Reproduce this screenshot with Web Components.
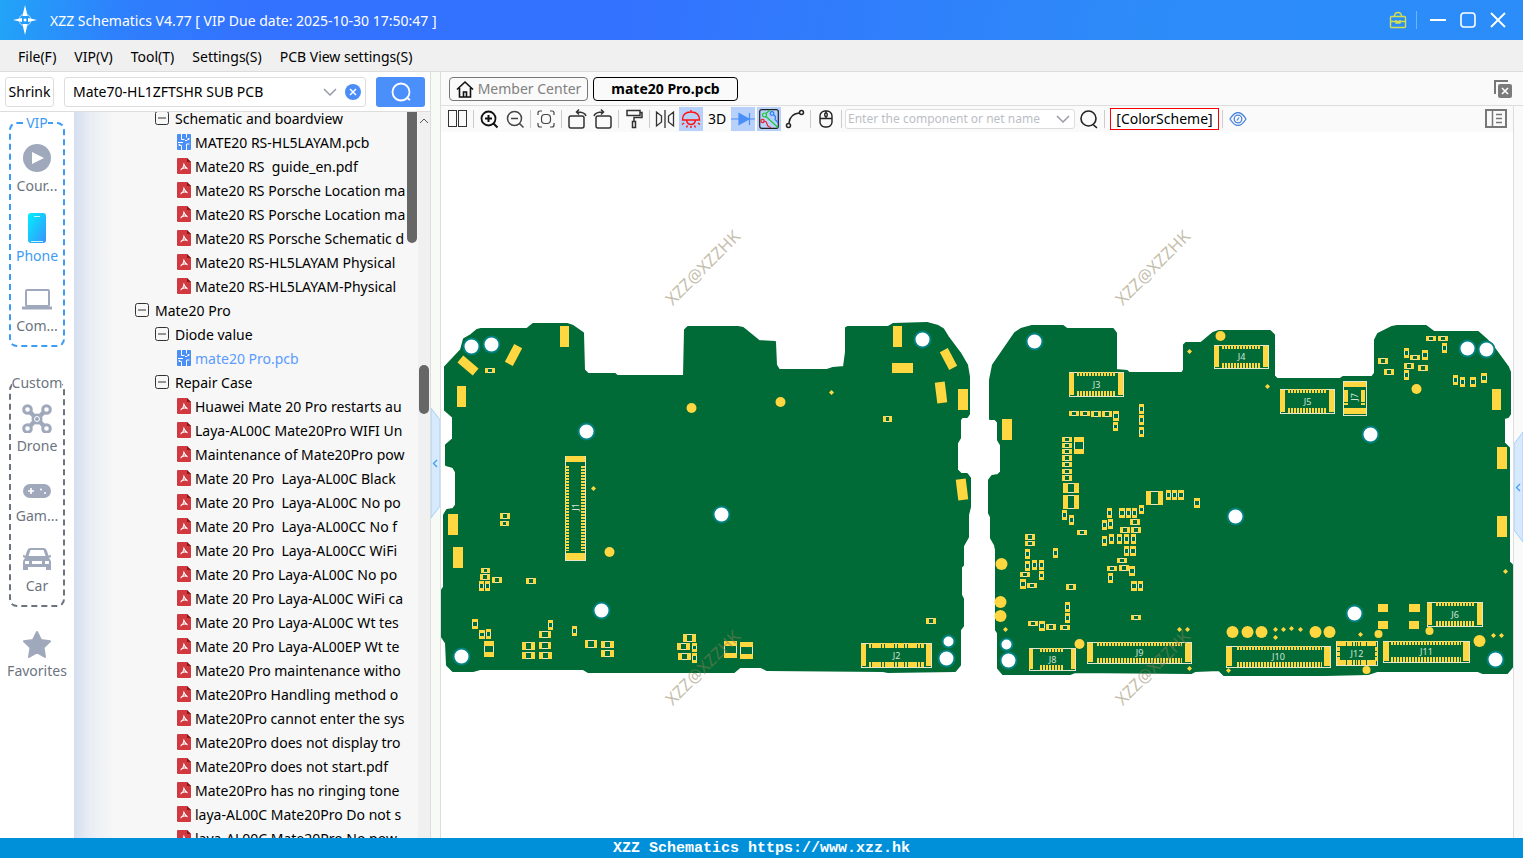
<!DOCTYPE html>
<html lang="en">
<head>
    <meta charset="UTF-8">
    <meta name="viewport" content="width=device-width, initial-scale=1.0">
    <title>XZZ Schematics</title>
    <style>
        html, body {
            height: 100%;
            margin: 0;
        }
        body {
            font-family: "Noto Sans", "Open Sans", sans-serif;
            font-size: 14px;
            line-height: 20px;
            color: #000;
            overflow: hidden;
        }
    </style>
</head>
<body>
    <xzz-app></xzz-app>

    <script>
        const icons = {
            star4: `<svg width="24" height="30" viewBox="0 0 24 30" fill="#fff"><path d="M12 0l2.6 11h-5.200zM12 30l-2.600-11h5.200zM0 15l9-2v4zM24 15l-9-2v4z"/><circle cx="12" cy="15" r="6" fill="none" stroke="#fff" stroke-opacity=".6"/><circle cx="12" cy="15" r="1.500"/></svg>`,
            vip: `<svg width="18" height="18" viewBox="0 0 18 18" fill="none" stroke="#d3e04c" stroke-width="1.400"><rect x="1.500" y="5.500" width="15" height="11" rx="1"/><path d="M5.500 5.500q0-4 3.500-4t3.500 4M1.500 10.500h15M7 9v3h4v-3"/></svg>`,
            min: `<svg width="18" height="18"><path d="M1 9h16" stroke="#fff" stroke-width="2"/></svg>`,
            max: `<svg width="18" height="18"><rect x="2" y="2" width="14" height="14" rx="3" fill="none" stroke="#fff" stroke-width="1.600"/></svg>`,
            close: `<svg width="18" height="18"><path d="M2 2l14 14M16 2L2 16" stroke="#fff" stroke-width="1.800"/></svg>`,
            down: `<svg width="14" height="8" fill="none" stroke="#999ca8" stroke-width="1.500"><path d="M1 1l6 6 6-6"/></svg>`,
            clear: `<svg width="16" height="16"><circle cx="8" cy="8" r="8" fill="#4a8df6"/><path d="M5 5l6 6M11 5l-6 6" stroke="#fff" stroke-width="1.500"/></svg>`,
            find: `<svg width="22" height="22" fill="none" stroke="#fff" stroke-width="1.800"><circle cx="11" cy="11" r="8.500"/><path d="M16.500 16.500l3.500 2.500"/></svg>`,
            play: `<svg width="30" height="30"><circle cx="15" cy="15" r="14" fill="#a0a9bc"/><path d="M10 9v12l12-6z" fill="#fff"/></svg>`,
            phone: `<svg width="30" height="30"><defs><linearGradient id="g" x1="0" x2="1" y2="1"><stop stop-color="#00f0ff"/><stop offset="1" stop-color="#3a91fb"/></linearGradient></defs><rect x="6" y="0" width="18" height="30" rx="3" fill="url(#g)"/><path d="M12 3.500h6M9 28.500h12" stroke="#c8f6ff" stroke-width="1"/></svg>`,
            laptop: `<svg width="30" height="30" fill="none" stroke="#a0a9bc" stroke-width="2"><rect x="4" y="7" width="23" height="16" rx="1"/><path d="M0 25h30" stroke-width="3"/></svg>`,
            drone: `<svg width="30" height="30" viewBox="0 -1 30 30" fill="none" stroke="#a0a9bc"><path d="M8 8l14 14M22 8L8 22" stroke-width="4.500"/><g stroke-width="3"><circle cx="5.500" cy="5.500" r="3.800"/><circle cx="24.500" cy="5.500" r="3.800"/><circle cx="5.500" cy="24.500" r="3.800"/><circle cx="24.500" cy="24.500" r="3.800"/></g><circle cx="15" cy="15" r="5.500" fill="#a0a9bc" stroke="none"/><circle cx="15" cy="15" r="2.500" fill="#a0a9bc" stroke="#fff"/></svg>`,
            game: `<svg width="30" height="30"><rect x="1" y="11" width="28" height="14" rx="7" fill="#a0a9bc"/><path d="M6 18h6M9 15v6" stroke="#fff" stroke-width="1.600"/><circle cx="19" cy="16.500" r="1" fill="#fff"/><circle cx="23" cy="20" r="1" fill="#fff"/></svg>`,
            car: `<svg width="30" height="30" viewBox="0 -1 30 30"><path fill="#a0a9bc" fill-rule="evenodd" d="M8 4h14q2 0 3 3l1.500 4.500 2.500-.5v2l-2 1q2 2 2 4v8h-5v-3h-18v3h-5v-8q0-2 2-4l-2-1v-2l2.500.5L5 7q1-3 3-3zM8.500 6L6.500 12h17l-2-6zM3 17v3h4v-3zM23 17v3h4v-3zM10 17v3h10v-3z"/></svg>`,
            star: `<svg width="30" height="30" viewBox="0 -1 30 30"><path fill="#a0a9bc" stroke="#a0a9bc" stroke-width="2" stroke-linejoin="round" d="M15 3l4 8 9 1.300-6.500 6.300L23 28l-8-4.500L7 28l1.500-9.400L2 12.300 11 11z"/></svg>`,
            minus: `<svg width="14" height="14" fill="none" stroke="#333"><rect x=".5" y=".5" width="13" height="13" rx="2"/><path d="M3 7h8"/></svg>`,
            pdf: `<svg width="14" height="16"><path d="M0 1q0-1 1-1h9l4 4v11q0 1-1 1h-12q-1 0-1-1z" fill="#d2383f"/><path d="M10 0v4h4z" fill="#8e1218"/><path d="M6.500 5.500q1.500 4 4 5.500M7 6q-.5 4.500-3.500 6M4 11.300q3-2 6.500-.800" fill="none" stroke="#fff" stroke-width="1.100"/></svg>`,
            pcb: `<svg width="14" height="16"><rect width="14" height="16" rx="1" fill="#4a8ff7"/><path d="M4.500 0v5.500h3M4.500 16v-4.500h-2M9.500 0v3.500M9.500 16v-6h3" fill="none" stroke="#fff"/><path d="M1 8.500h5M8 6.500h2l2-2" fill="none" stroke="#fff"/><circle cx="2.500" cy="11" r="1" fill="#fff"/><circle cx="11.500" cy="5" r="1" fill="#fff"/></svg>`,
            home: `<svg width="18" height="18" fill="none" stroke="#111" stroke-width="1.600"><path d="M1 9.500l8-7.500 8 7.500M3.500 8v9h11v-9M7.500 17v-5h3v5"/></svg>`,
            closeAll: `<svg width="20" height="20"><path d="M2 15V2h13" fill="none" stroke="#777" stroke-width="2"/><rect x="5" y="5" width="14" height="14" rx="2" fill="#7b7b7b"/><path d="M9 9l6 6M15 9l-6 6" stroke="#fff" stroke-width="1.600"/></svg>`,
            split: `<svg width="20" height="18" fill="none" stroke="#333"><rect x=".5" y=".5" width="8" height="16"/><rect x="10.500" y=".5" width="8" height="16"/></svg>`,
            zoomIn: `<svg width="20" height="20" fill="none" stroke="#111" stroke-width="1.800"><circle cx="9.500" cy="9.500" r="7"/><path d="M14.500 14.500l4 4M6 9.500h7M9.500 6v7" stroke-width="2"/></svg>`,
            zoomOut: `<svg width="20" height="20" fill="none" stroke="#444" stroke-width="1.500"><circle cx="9.500" cy="9.500" r="7"/><path d="M14.500 14.500l4 4M6 9.500h7"/></svg>`,
            fit: `<svg width="18" height="18" fill="none" stroke="#444" stroke-width="1.200"><path d="M1 5V3q0-2 2-2h2M13 1h2q2 0 2 2v2M17 13v2q0 2-2 2h-2M5 17H3q-2 0-2-2v-2"/><rect x="4.500" y="4.500" width="9" height="9" rx="3.500"/></svg>`,
            rotateL: `<svg width="20" height="20" fill="none" stroke="#333" stroke-width="1.500"><rect x="2" y="7" width="15" height="12" rx="2"/><path d="M19 7q-1-4-9-4M12 .5L9.500 3l2.500 2.500"/></svg>`,
            rotateR: `<svg width="20" height="20" fill="none" stroke="#333" stroke-width="1.500"><rect x="3" y="7" width="15" height="12" rx="2"/><path d="M1 7q1-4 9-4M8 .5l2.500 2.500L8 5.500"/></svg>`,
            roller: `<svg width="18" height="20" fill="none" stroke="#333" stroke-width="1.500"><rect x="2" y="1.500" width="13" height="5"/><path d="M15 3.500h2v5H9v4M7.500 12.500h3v6h-3z"/></svg>`,
            mirror: `<svg width="20" height="18" fill="none" stroke="#333" stroke-width="1.300"><path d="M10 0v18M1.500 2v14l5-4V6zM18.500 2v14l-5-4V6z"/></svg>`,
            lamp: `<svg width="20" height="20" fill="none" stroke="#f11" stroke-width="1.400"><path d="M1.500 11q0-8 8.500-8t8.500 8zM10 3V1M5.500 11.500q1 4 4.500 4t4.500-4M3 14l-2 1.500M17 14l2 1.500M6.500 16.500l-1 2M13.500 16.500l1 2M10 17v2"/></svg>`,
            diode: `<svg width="24" height="20" fill="#4a8ff7" stroke="#4a8ff7" stroke-width="1.200"><path d="M0 10h24M18.500 4v12"/><path d="M8 4.500l10 5.500-10 5.500z"/></svg>`,
            nets: `<svg width="20" height="20" fill="none" stroke-width="1.200"><rect x=".7" y=".7" width="18.600" height="18.600" rx="2" stroke="#222"/><path d="M7 7.500l12 11M7 4.500L11 1" stroke="#1bc436"/><circle cx="5.500" cy="6" r="2" stroke="#1bc436"/><circle cx="13" cy="4.500" r="1.800" stroke="#2b7cf5"/><path d="M14.500 5.500q3 2 1.500 5l3 3" stroke="#2b7cf5"/><circle cx="3.500" cy="12" r="1.600" stroke="#e22"/><path d="M5 12.500q2.500-.5 3 2.500t4 3.500" stroke="#e22"/></svg>`,
            curve: `<svg width="20" height="20" fill="none" stroke="#222" stroke-width="1.500"><circle cx="16.500" cy="3.500" r="2"/><circle cx="3.500" cy="16.500" r="2"/><path d="M4 14Q5 5 14 4"/></svg>`,
            mouse: `<svg width="16" height="18" fill="none" stroke="#222" stroke-width="1.400"><rect x="2" y="1" width="12" height="16" rx="5"/><path d="M2 8.500h12M8 1v2M8 6v2"/><rect x="6.800" y="3" width="2.400" height="3.500" rx="1"/></svg>`,
            search: `<svg width="20" height="20" fill="none" stroke="#222" stroke-width="1.600"><circle cx="9.500" cy="9.500" r="7.500"/><path d="M14 15.500l4 3.500"/></svg>`,
            eye: `<svg width="18" height="14" fill="none" stroke="#4a84e0" stroke-width="1.300"><path d="M1 7q8-13 16 0q-8 13-16 0z"/><circle cx="9" cy="7" r="3.800"/><path d="M8 8.500l2-3"/></svg>`,
            panel: `<svg width="22" height="20" fill="none" stroke="#777" stroke-width="2"><rect x="1" y="1" width="20" height="17"/><path d="M7.500 1v17M11 5.500h6M11 9.500h6M11 13.500h6" stroke-width="1.500"/></svg>`
        }

        // Small base class: attaches the root and fills it from render()
        class XzzElement extends HTMLElement {
            constructor() {
                super();
                this.attachShadow({mode: 'open'})
            }

            connectedCallback() {
                const template = document.createElement("template")
                template.innerHTML = `
                    <style>
                        * { box-sizing: border-box; }
                        svg { display: block; }
                        button, input { font: inherit; color: inherit; margin: 0; }
                        button { border: 0; padding: 0; background: none; }
                    </style>
                    ${this.render()}`
                this.shadowRoot.appendChild(template.content.cloneNode(true));
            }
        }

        class TitleBar extends XzzElement {
            render() {
                return `
                    <style>
                        :host {
                            display: flex;
                            align-items: center;
                            height: 40px;
                            padding: 0 16px 0 13px;
                            color: #fff;
                            background: linear-gradient(100deg, #22a4f8 0, #2e80fc 8%, #3371ff 17%, #3371ff 40%, #2d8bf8 75%, #2b8df9 100%);
                        }
                        h1 { flex: 1; margin: 0 0 0 13px; padding-top: 2px; font-size: 14px; font-weight: 400; }
                        .buttons { display: flex; align-items: center; gap: 12px; }
                        .buttons button:first-child { margin-right: -3px; }
                        i { width: 1px; height: 18px; background: #6fb3ff; }
                    </style>
                    ${icons.star4}
                    <h1><slot></slot></h1>
                    <div class="buttons">
                        <button aria-label="VIP">${icons.vip}</button>
                        <i></i>
                        <button aria-label="Minimize">${icons.min}</button>
                        <button aria-label="Maximize">${icons.max}</button>
                        <button aria-label="Close">${icons.close}</button>
                    </div>`
            }
        }

        class MenuBar extends XzzElement {
            render() {
                const items = ["File(F)", "VIP(V)", "Tool(T)", "Settings(S)", "PCB View settings(S)"]
                return `
                    <style>
                        :host {
                            display: flex;
                            gap: 18px;
                            height: 32px;
                            padding: 2px 18px 0;
                            background: #f0f0f0;
                            border-bottom: 1px solid #dcdcdc;
                            box-sizing: border-box;
                        }
                    </style>
                    ${items.map(item => `<button>${item}</button>`).join("")}`
            }
        }

        class SearchBar extends XzzElement {
            render() {
                return `
                    <style>
                        :host {
                            display: flex;
                            align-items: center;
                            height: 40px;
                            padding: 0 5px;
                            box-sizing: border-box;
                            background: #fff;
                            border-bottom: 1px solid #ddd;
                        }
                        .shrink { width: 49px; height: 30px; border: 1px solid #ddd; border-radius: 3px; }
                        .field {
                            flex: 1;
                            display: flex;
                            align-items: center;
                            gap: 8px;
                            height: 30px;
                            margin: 0 10px;
                            padding: 0 4px 0 8px;
                            border: 1px solid #ddd;
                            border-radius: 3px;
                            min-width: 0;
                        }
                        input { flex: 1; min-width: 0; border: 0; padding: 0; outline: 0; background: none; }
                        .go { display: grid; place-items: center; width: 49px; height: 30px; background: #4b8ffb; border-radius: 3px; }
                    </style>
                    <button class="shrink">Shrink</button>
                    <div class="field">
                        <input aria-label="Search model" value="Mate70-HL1ZFTSHR SUB PCB">
                        <button aria-label="History">${icons.down}</button>
                        <button aria-label="Clear">${icons.clear}</button>
                    </div>
                    <button class="go" aria-label="Search">${icons.find}</button>`
            }
        }

        class NavItem extends XzzElement {
            render() {
                return `
                    <style>
                        :host { display: block; color: #6c7480; }
                        :host([active]) { color: #3d9bf5; }
                        button { display: flex; flex-direction: column; align-items: center; gap: 3px; width: 100%; white-space: nowrap; }
                    </style>
                    <button>${icons[this.getAttribute("icon")]}<span><slot></slot></span></button>`
            }
        }

        class SideNav extends XzzElement {
            render() {
                return `
                    <style>
                        :host { display: flex; flex-direction: column; width: 74px; background: #fff; padding-top: 1px; box-sizing: border-box; }
                        fieldset {
                            display: flex;
                            flex-direction: column;
                            gap: 17px;
                            min-width: 0;
                            margin: 0 9px 26px;
                            padding: 10px 0 9px;
                            border: 2px dashed #3d9bf5;
                            border-radius: 8px;
                        }
                        fieldset.custom { border-color: #6c7480; margin-bottom: 21px; }
                        legend { margin: 0 auto; padding: 0; color: #3d9bf5; }
                        .custom legend { color: #6c7480; }
                    </style>
                    <fieldset>
                        <legend>VIP</legend>
                        <nav-item icon="play">Cour...</nav-item>
                        <nav-item icon="phone" active>Phone</nav-item>
                        <nav-item icon="laptop">Com...</nav-item>
                    </fieldset>
                    <fieldset class="custom">
                        <legend>Custom</legend>
                        <nav-item icon="drone">Drone</nav-item>
                        <nav-item icon="game">Gam...</nav-item>
                        <nav-item icon="car">Car</nav-item>
                    </fieldset>
                    <nav-item icon="star">Favorites</nav-item>`
            }
        }

        class TreeRow extends XzzElement {
            render() {
                const kind = this.getAttribute("kind")
                return `
                    <style>
                        :host { display: flex; align-items: center; height: 24px; white-space: pre; padding-left: 103px; gap: 4px; }
                        :host([kind="model"]) { padding-left: 61px; gap: 6px; }
                        :host([kind="folder"]) { padding-left: 81px; gap: 6px; }
                        :host([current]) { color: #5b9bfd; }
                        svg { flex: none; }
                        span { padding-top: 2px; }
                    </style>
                    ${icons[kind === "model" || kind === "folder" ? "minus" : kind]}<span><slot></slot></span>`
            }
        }

        const files = [
            ["folder", "Schematic and boardview"],
            ["pcb", "MATE20 RS-HL5LAYAM.pcb"],
            ["pdf", "Mate20 RS  guide_en.pdf"],
            ["pdf", "Mate20 RS Porsche Location ma"],
            ["pdf", "Mate20 RS Porsche Location ma"],
            ["pdf", "Mate20 RS Porsche Schematic d"],
            ["pdf", "Mate20 RS-HL5LAYAM Physical"],
            ["pdf", "Mate20 RS-HL5LAYAM-Physical"],
            ["model", "Mate20 Pro"],
            ["folder", "Diode value"],
            ["pcb", "mate20 Pro.pcb", "current"],
            ["folder", "Repair Case"],
            ["pdf", "Huawei Mate 20 Pro restarts au"],
            ["pdf", "Laya-AL00C Mate20Pro WIFI Un"],
            ["pdf", "Maintenance of Mate20Pro pow"],
            ["pdf", "Mate 20 Pro  Laya-AL00C Black"],
            ["pdf", "Mate 20 Pro  Laya-AL00C No po"],
            ["pdf", "Mate 20 Pro  Laya-AL00CC No f"],
            ["pdf", "Mate 20 Pro  Laya-AL00CC WiFi"],
            ["pdf", "Mate 20 Pro Laya-AL00C No po"],
            ["pdf", "Mate 20 Pro Laya-AL00C WiFi ca"],
            ["pdf", "Mate 20 Pro Laya-AL00C Wt tes"],
            ["pdf", "Mate 20 Pro Laya-AL00EP Wt te"],
            ["pdf", "Mate20 Pro maintenance witho"],
            ["pdf", "Mate20Pro Handling method o"],
            ["pdf", "Mate20Pro cannot enter the sys"],
            ["pdf", "Mate20Pro does not display tro"],
            ["pdf", "Mate20Pro does not start.pdf"],
            ["pdf", "Mate20Pro has no ringing tone"],
            ["pdf", "laya-AL00C Mate20Pro Do not s"],
            ["pdf", "laya-AL00C Mate20Pro No pow"]
        ]

        class FileTree extends XzzElement {
            render() {
                return `
                    <style>
                        :host {
                            flex: 1;
                            display: flex;
                            min-width: 0;
                            background: linear-gradient(90deg, #d5dff0 0, #e9edf4 16px, #f7f7f7 40px);
                        }
                        .rows { flex: 1; min-width: 0; overflow: hidden; }
                        .list { margin-top: -6px; }
                        .inner { width: 11px; }
                        .inner i { display: block; width: 10px; height: 131px; background: #666; border-radius: 0 0 5px 5px; }
                        .outer { width: 12px; background: #f0f0f0; padding-top: 6px; }
                        .outer svg { margin: 0 auto; }
                        .outer i { display: block; width: 10px; height: 49px; margin: 241px 1px 0; background: #666; border-radius: 5px; }
                    </style>
                    <div class="rows"><div class="list">
                        ${files.map(([kind, name, current]) => `<tree-row kind="${kind}" ${current || ""}>${name}</tree-row>`).join("")}
                    </div></div>
                    <div class="inner"><i></i></div>
                    <div class="outer">
                        <svg width="10" height="6" fill="none" stroke="#555"><path d="M1 5l4-4 4 4"/></svg>
                        <i></i>
                    </div>`
            }
        }

        class PaneHandle extends XzzElement {
            render() {
                return `
                    <style>
                        :host { display: flex; flex-direction: column; width: 10px; box-sizing: border-box; background: #fafafa; border-left: 1px solid #ddd; }
                        button { margin-top: var(--handle-top); }
                    </style>
                    <button aria-label="Toggle panel">
                        <svg width="9" height="110"><path d="${this.hasAttribute("flip") ? "M9 0L0 12v86l9 12z" : "M0 0l9 12v86l-9 12z"}" fill="#d6e9fd" stroke="#a3d1f9"/><path d="M6 52l-3.500 3.500 3.500 3.500" fill="none" stroke="#3d9bf5" stroke-width="1.200"/></svg>
                    </button>`
            }
        }

        class TabStrip extends XzzElement {
            render() {
                return `
                    <style>
                        :host {
                            display: flex;
                            align-items: center;
                            gap: 5px;
                            height: 34px;
                            padding: 0 10px 0 8px;
                            background: #fafafa;
                            border-bottom: 1px solid #ddd;
                            box-sizing: border-box;
                        }
                        .tab { display: flex; align-items: center; justify-content: center; gap: 4px; width: 139px; height: 24px; border: 1px solid #777; border-radius: 4px; color: #808080; }
                        .tab.on { width: 145px; border-color: #000; color: #000; font-weight: 700; }
                        .all { margin-left: auto; }
                    </style>
                    <button class="tab">${icons.home}Member Center</button>
                    <button class="tab on">mate20 Pro.pcb</button>
                    <button class="all" aria-label="Close all tabs">${icons.closeAll}</button>`
            }
        }

        class ToolBar extends XzzElement {
            render() {
                const tools = ["split", "|", "zoomIn", "zoomOut", "|", "fit", "|", "rotateL", "rotateR", "|", "roller", "|",
                    "mirror", "lamp*", "3D", "diode*", "nets*", "curve", "|", "mouse", "|"]
                const draw = name => {
                    if (name === "|") return `<i></i>`
                    const key = name.replace("*", "")
                    return `<button class="tool ${name.endsWith("*") ? "on" : ""}" aria-label="${key}">${icons[key] || key}</button>`
                }
                return `
                    <style>
                        :host { display: flex; align-items: center; gap: 2px; height: 26px; padding: 0 5px; background: #fafafa; }
                        .tool { display: grid; place-items: center; width: 24px; height: 24px; }
                        .on { background: #b7d1fb; }
                        i { width: 1px; height: 18px; margin: 0 1px; background: #ccc; }
                        .net { display: flex; align-items: center; width: 230px; height: 20px; padding: 0 4px 0 2px; border: 1px solid #ddd; border-radius: 3px; background: #fff; }
                        input { flex: 1; min-width: 0; border: 0; padding: 0; outline: 0; font-size: 12px; background: none; }
                        input::placeholder { color: #bbbec6; }
                        .scheme { height: 22px; width: 109px; border: 1px solid #f00; margin-left: 2px; background: #fff; }
                        .last { margin-left: auto; }
                    </style>
                    ${tools.map(draw).join("")}
                    <div class="net">
                        <input aria-label="Component or net" placeholder="Enter the component or net name">
                        <button aria-label="Recent nets">${icons.down}</button>
                    </div>
                    <button class="tool" aria-label="Find">${icons.search}</button>
                    <i></i>
                    <button class="scheme">[ColorScheme]</button>
                    <i></i>
                    <button class="tool" aria-label="View">${icons.eye}</button>
                    <button class="tool last" aria-label="Side panel">${icons.panel}</button>`
            }
        }

        // Board geometry, in canvas units
        const outlines = [
            `445,367 461,350 464,339 471,335 477,330 481,329 527,329 533,324 567,324 573,326 583,333 584,370 588,374 615,374 617,376 684,376
            685,330 688,327 738,327 743,328 759,341 775,342 776,365 779,370 827,370 833,368 844,367 846,352 846,328 848,327 888,327 893,324
            927,323 938,326 943,329 948,337 960,353 967,365 969,377 969,414 967,417 962,417 960,420 960,438 957,443 957,470 961,474 967,474
            970,478 970,507 968,515 968,537 963,546 963,565 961,567 961,595 963,599 963,626 960,630 960,665 955,671 888,672 883,671 767,670
            761,667 740,667 734,672 588,672 583,669 480,669 473,671 453,671 447,665 446,643 442,637 442,590 444,587 444,515 447,510 453,509
            456,505 456,472 453,467 446,465 446,445 453,439 453,417 445,410`,
            `990,413 990,380 993,365 1015,333 1021,329 1032,326 1063,326 1067,329 1113,329 1116,333 1116,370 1127,371 1129,373 1182,373
            1184,370 1184,345 1186,343 1201,343 1213,333 1219,331 1270,331 1274,335 1274,376 1277,379 1340,379 1343,377 1372,377 1375,373
            1375,340 1378,334 1392,327 1397,326 1426,326 1434,332 1478,332 1487,340 1497,352 1508,367 1510,372 1510,414 1508,417 1504,418
            1504,443 1509,448 1509,562 1512,565 1512,667 1507,673 1483,673 1478,671 1377,671 1368,674 1325,675 1224,675 1219,670 1195,671
            1191,673 1075,672 1070,674 1003,674 998,668 998,633 996,630 996,550 995,545 991,538 991,517 989,513 989,480 992,476 998,475
            1001,472 1001,445 998,440 998,422 995,419 990,419`
        ]

        // x y w h
        const chips = `485 368 10 5,883 416 9 6,500 513 10 6,500 521 9 5,481 568 9 5,480 574 10 6,479 581 5 10,485 581 5 10,492 577 10 6,
            526 578 10 6,472 619 6 10,479 630 6 9,486 629 5 10,484 641 10 16,522 642 13 8,522 652 13 7,548 620 5 10,539 631 12 7,539 642 12 7,
            539 652 13 7,572 626 5 10,585 640 12 8,601 641 13 7,601 650 13 7,683 634 13 8,677 643 13 7,678 653 13 7,692 643 5 9,692 653 5 10,
            724 641 13 17,740 642 13 17,926 618 10 6,1069 411 10 5,1080 411 10 5,1091 411 10 6,1102 411 10 6,1113 411 6 10,1113 422 5 9,
            1139 404 5 10,1139 415 5 10,1139 427 5 10,1062 437 10 5,1062 443 10 5,1062 449 10 5,1062 455 10 6,1062 462 10 5,1062 469 10 5,
            1062 475 10 6,1074 437 10 17,1063 483 16 10,1063 495 16 14,1146 491 17 14,1166 490 5 10,1172 490 5 10,1178 490 6 10,1194 498 6 10,
            1062 510 5 10,1069 515 5 10,1077 530 10 5,1025 534 10 6,1025 541 10 5,1025 549 5 10,1053 548 5 10,1025 561 5 10,1032 560 5 10,
            1039 560 5 10,1039 571 5 9,1020 572 10 5,1020 579 6 10,1027 583 10 5,1066 584 10 6,1065 602 5 10,1065 613 5 10,1028 621 10 5,
            1039 621 6 10,1046 624 10 6,1060 625 10 5,1107 508 5 10,1102 520 5 10,1108 519 5 10,1102 536 5 10,1109 534 5 10,1117 534 5 10,
            1124 534 5 10,1131 534 5 10,1119 508 6 10,1126 508 5 10,1132 508 5 10,1139 505 5 9,1130 519 10 6,1120 527 10 6,1131 527 10 6,
            1124 546 5 10,1130 546 6 10,1117 558 10 5,1119 565 10 6,1107 566 10 5,1129 566 6 10,1108 573 5 10,1131 581 6 10,1138 581 5 10,
            1131 615 10 5,1426 336 10 5,1438 336 10 5,1442 343 5 10,1404 348 5 10,1422 350 6 10,1410 355 10 5,1404 363 10 6,1418 365 10 6,
            1404 370 5 10,1378 358 10 6,1384 369 10 6,1453 375 5 10,1460 377 5 10,1470 377 6 10,1481 373 6 10`

        // x y w h angle
        const pads = `560 326 9 21 0,457 386 9 21 0,458 361 20 9 40,509 345 9 20 28,893 326 9 21 0,892 363 21 10 0,958 389 10 21 0,
            944 349 9 20 -28,936 382 10 21 -7,957 479 10 21 -7,448 514 10 21 0,453 547 10 21 0,1002 419 10 21 0,1492 389 9 21 0,
            1497 447 10 22 0,1497 516 10 21 0,1378 604 10 8 0,1409 604 11 8 0,1378 621 10 8 0,1409 621 10 8 0`

        // cx cy r
        const holes = `471 346 8,491 344 8,586 431 8,922 339 8,601 610 8,461 656 8,721 514 8,946 658 8,948 641 6,1034 341 8,1370 434 8,
            1467 348 8,1486 349 8,1235 516 8,1008 660 8,1006 644 6,1354 613 8,1495 659 8`
        const dots = `691 408 5,780 402 5,609 552 5,1220 336 5,1416 389 5,1079 644 5,1378 634 4,1429 631 4,1366 670 4,1001 564 6,1000 602 6,
            1000 616 6,1232 632 6,1247 632 6,1261 632 6,1315 632 6,1329 632 6,1479 641 6`
        const marks = `593 488,831 392,1189 351,1267 386,1005 629,1179 629,1187 629,1189 668,1228 670,1275 629,1283 629,1291 628,1300 629,
            1275 637,1360 634,1505 571,1493 635,1501 635`

        // name, x, y, w, h, end bar, pin start, pin end, dash
        const connectors = [
            ["J2", 861, 643, 71, 25, 5, 869, 924, "2 1 9 1 2 1 9 1 2 1 6 1 2 1 9 1 2 1 3 1"],
            ["J3", 1069, 372, 55, 25, 5, 1077, 1115, "2 1"],
            ["J4", 1214, 345, 55, 24, 5, 1222, 1261, "2 1"],
            ["J5", 1280, 389, 55, 25, 5, 1288, 1326, "2 1"],
            ["J6", 1427, 602, 56, 25, 5, 1436, 1475, "2 1"],
            ["J8", 1029, 648, 47, 23, 4, 1040, 1064, "2 1"],
            ["J9", 1087, 642, 105, 22, 6, 1097, 1182, "2 1"],
            ["J10", 1226, 646, 105, 22, 6, 1237, 1322, "2 1"],
            ["J11", 1383, 641, 87, 22, 6, 1391, 1461, "2 1"],
            ["J12", 1336, 641, 42, 25, 0, 1337, 1377, "9 1 5 1 2 1 1 1 2 1 5 1 9 3"]
        ]

        const parse = text => text.split(",").map(item => item.trim().split(/\s+/).map(Number))

        class PcbBoard extends XzzElement {
            chip([x, y, w, h]) {
                const flat = w > h
                const end = Math.max(3, Math.round(Math.max(w, h) / 3.5))
                const ends = flat
                    ? `<path d="M${x} ${y}h${end}v${h}h-${end}zM${x + w - end} ${y}h${end}v${h}h-${end}z"/>`
                    : `<path d="M${x} ${y}h${w}v${end}h-${w}zM${x} ${y + h - end}h${w}v${end}h-${w}z"/>`
                return `<rect class="line" x="${x + .5}" y="${y + .5}" width="${w - 1}" height="${h - 1}"/>${ends}`
            }

            connector([name, x, y, w, h, end, from, to, dash]) {
                const bars = end ? `<path d="M${x} ${y + 1}h${end}v${h - 3}h-${end}zM${x + w - end - 1} ${y + 1}h${end}v${h - 3}h-${end}z"/>`
                    : `<path class="pins" d="M${x + 2} ${y + 6}v14M${x + w - 2} ${y + 6}v14" stroke-width="3" stroke-dasharray="4 1"/>`
                const top = name === "J2" || name === "J12" ? 5 : 4
                return `
                    <rect class="line" x="${x + .5}" y="${y + .5}" width="${w - 1}" height="${h - 1}"/>
                    ${bars}
                    <path class="pins" d="M${from} ${y + top / 2}H${to}" stroke-width="${top}" stroke-dasharray="${dash}"/>
                    <path class="pins" d="M${from} ${y + h - 4}H${to}" stroke-width="5" stroke-dasharray="${dash}"/>
                    <text x="${x + w / 2}" y="${y + h / 2 + 3}">${name}</text>`
            }

            render() {
                return `
                    <style>
                        :host { display: block; flex: 1; min-width: 0; min-height: 0; background: #fff; overflow: hidden; }
                        svg { width: 100%; height: 100%; fill: #ffd740; }
                        .board { fill: #006b36; stroke: #006b36; stroke-width: 2; stroke-linejoin: round; }
                        .chips, .chips + g { shape-rendering: crispEdges; }
                        .line { fill: none; stroke: #e6e6cf; }
                        .pins { fill: none; stroke: #ffd740; }
                        .holes { fill: #fff; stroke: #008080; stroke-width: 2; }
                        text { fill: #d5e3d6; font-size: 9px; text-anchor: middle; }
                        .mark { fill: #8b7e58; fill-opacity: .5; font-size: 17px; }
                    </style>
                    <svg viewBox="441 132 1072 706" role="img" aria-label="Board view">
                        ${outlines.map(points => `<polygon class="board" points="${points}"/>`).join("")}
                        <g class="chips">${parse(chips).map(this.chip).join("")}</g>
                        <g>
                            ${connectors.map(this.connector).join("")}
                            <rect class="line" x="565.5" y="456.5" width="20" height="104"/>
                            <path d="M566 456h19v6h-19zM566 553h19v7h-19z"/>
                            <path class="pins" d="M567 466V551M583 466V551" stroke-width="4" stroke-dasharray="2 1"/>
                            <text transform="translate(579 507) rotate(-90)">J1</text>
                            <rect class="line" x="1343.500" y="381.500" width="23" height="34"/>
                            <path d="M1344 382h22v5h-22zM1344 408h22v6h-22zM1344 390h4v12h-4zM1344 403h4v2h-4zM1361 390h4v12h-4zM1361 403h4v2h-4z"/>
                            <text transform="translate(1358 397) rotate(-90)">J7</text>
                        </g>
                        ${parse(pads).map(([x, y, w, h, a]) => `<rect x="${x}" y="${y}" width="${w}" height="${h}" transform="rotate(${a} ${x + w / 2} ${y + h / 2})"/>`).join("")}
                        ${parse(dots).map(([x, y, r]) => `<circle cx="${x + .5}" cy="${y}" r="${r}"/>`).join("")}
                        ${parse(marks).map(([x, y]) => `<path d="M${x - 2} ${y + .5}l2.500-2.500 2.500 2.500-2.500 2.500z"/>`).join("")}
                        <g class="holes">${parse(holes).map(([x, y, r]) => `<circle cx="${x + .5}" cy="${y + .5}" r="${r}"/>`).join("")}</g>
                        ${[[707, 272], [1157, 272], [707, 672], [1157, 672]].map(([x, y]) => `<text class="mark" transform="translate(${x} ${y}) rotate(-45)">XZZ@XZZHK</text>`).join("")}
                    </svg>`
            }
        }

        class StatusBar extends XzzElement {
            render() {
                return `
                    <style>
                        :host {
                            display: block;
                            height: 20px;
                            background: #0090da;
                            color: #fff;
                            text-align: center;
                            font-family: "Liberation Mono", monospace;
                            font-size: 15px;
                            font-weight: 700;
                            line-height: 22px;
                        }
                    </style>
                    <slot></slot>`
            }
        }

        class XzzApp extends XzzElement {
            render() {
                return `
                    <style>
                        :host { display: flex; flex-direction: column; height: 100vh; }
                        main { flex: 1; display: flex; min-height: 0; }
                        .left { display: flex; flex-direction: column; width: 430px; }
                        .left div { flex: 1; display: flex; min-height: 0; }
                        .right { flex: 1; display: flex; flex-direction: column; min-width: 0; border-left: 1px solid #ddd; }
                        .row { flex: 1; display: flex; min-height: 0; }
                        .view { flex: 1; display: flex; flex-direction: column; min-width: 0; }
                        .split { --handle-top: 336px; background: #f8fbf5; }
                        .edge { --handle-top: 326px; }
                    </style>
                    <title-bar>XZZ Schematics V4.77 [ VIP Due date: 2025-10-30 17:50:47 ]</title-bar>
                    <menu-bar></menu-bar>
                    <main>
                        <div class="left">
                            <search-bar></search-bar>
                            <div><side-nav></side-nav><file-tree></file-tree></div>
                        </div>
                        <pane-handle class="split"></pane-handle>
                        <div class="right">
                            <tab-strip></tab-strip>
                            <div class="row">
                                <div class="view">
                                    <tool-bar></tool-bar>
                                    <pcb-board></pcb-board>
                                </div>
                                <pane-handle class="edge" flip></pane-handle>
                            </div>
                        </div>
                    </main>
                    <status-bar>XZZ Schematics https://www.xzz.hk</status-bar>`
            }
        }

        window.customElements.define('title-bar', TitleBar);
        window.customElements.define('menu-bar', MenuBar);
        window.customElements.define('search-bar', SearchBar);
        window.customElements.define('nav-item', NavItem);
        window.customElements.define('side-nav', SideNav);
        window.customElements.define('tree-row', TreeRow);
        window.customElements.define('file-tree', FileTree);
        window.customElements.define('pane-handle', PaneHandle);
        window.customElements.define('tab-strip', TabStrip);
        window.customElements.define('tool-bar', ToolBar);
        window.customElements.define('pcb-board', PcbBoard);
        window.customElements.define('status-bar', StatusBar);
        window.customElements.define('xzz-app', XzzApp);
    </script>
</body>
</html>
